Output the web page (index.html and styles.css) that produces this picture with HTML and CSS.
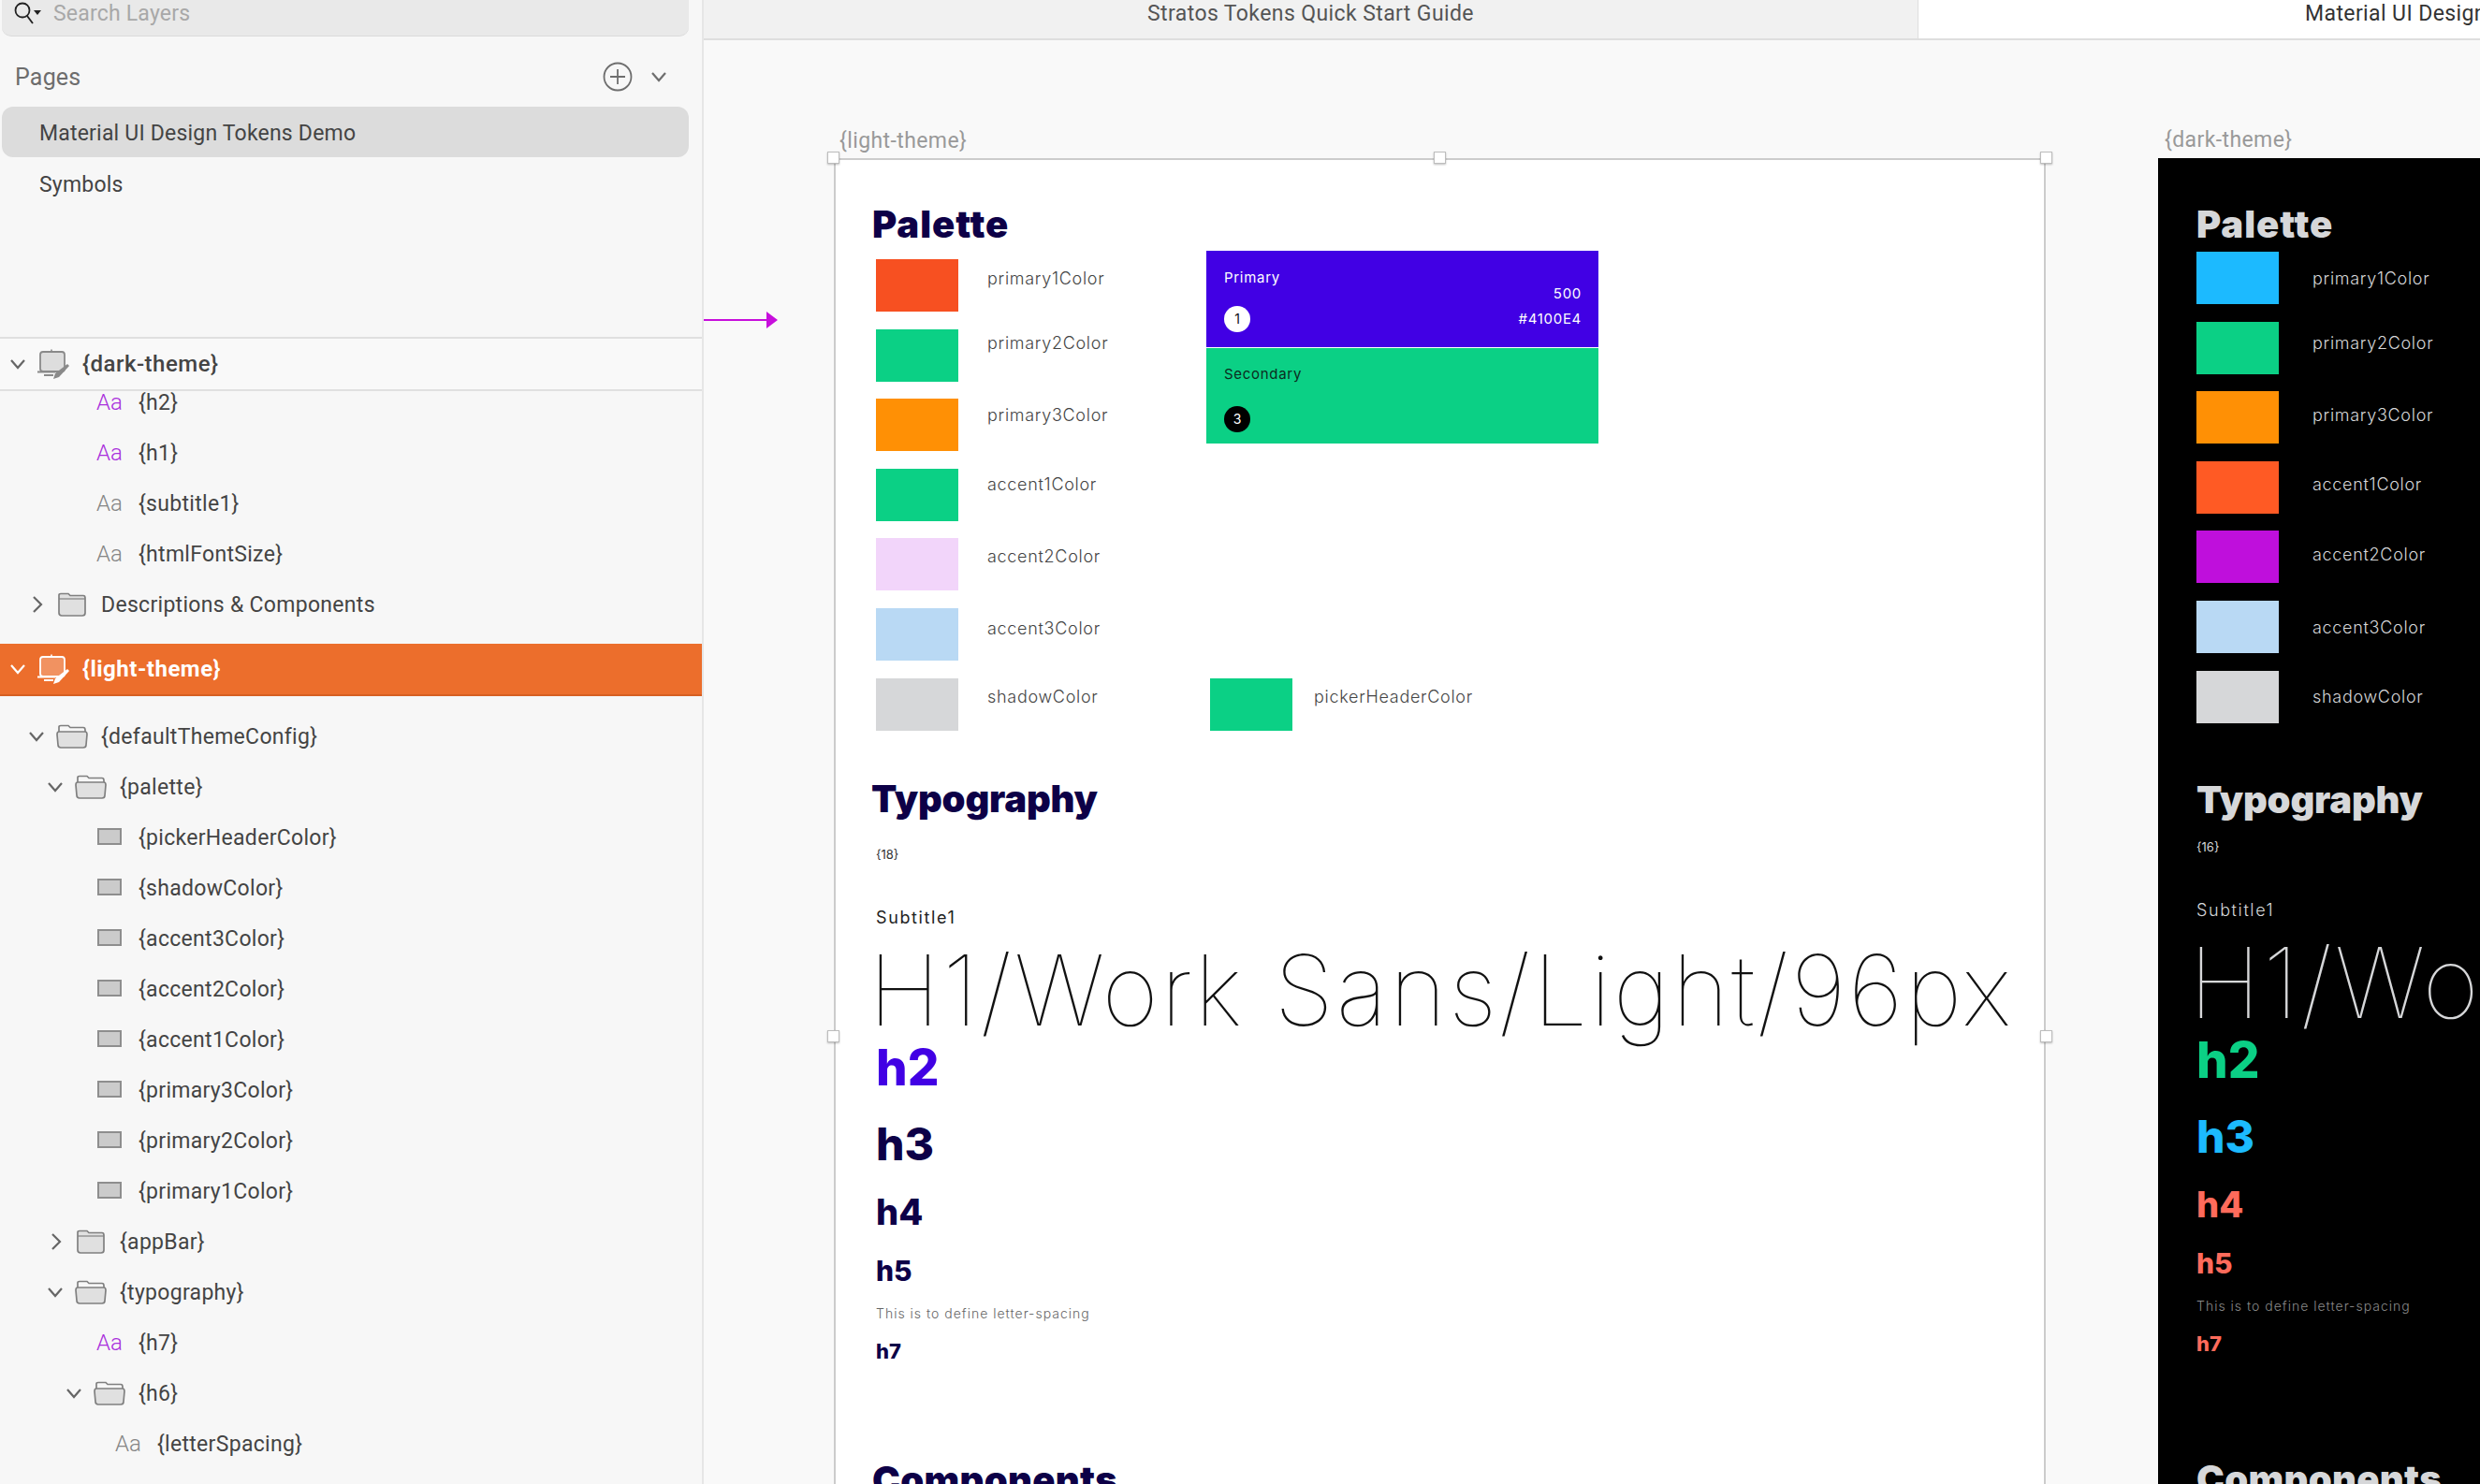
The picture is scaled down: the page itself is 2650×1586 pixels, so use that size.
FILE: index.html
```html
<!DOCTYPE html>
<html>
<head>
	<title>Material UI Design Tokens Demo</title>
	<link rel="stylesheet" href="styles.css">
</head>
<body>

	<svg class="defs" width="0" height="0">
		<symbol id="chev-down" viewBox="0 0 22 22"><path d="M4 7 L11 15 L18 7" fill="none" stroke="currentColor" stroke-width="2.2"/></symbol>
		<symbol id="chev-right" viewBox="0 0 22 22"><path d="M8 3 L16 11 L8 19" fill="none" stroke="currentColor" stroke-width="2.2"/></symbol>
		<symbol id="artboard" viewBox="0 0 34 32">
			<path d="M15 3 V0.5" stroke="currentColor" stroke-width="1.6"/>
			<rect x="3" y="3" width="26" height="21" rx="3" fill="currentColor" fill-opacity=".25" stroke="currentColor" stroke-width="1.8"/>
			<path d="M0 24.5 H19 M7 28 H17" stroke="currentColor" stroke-width="1.8"/>
			<path d="M32 16 L34 18 L23 30 L17 32 L19 26 Z" fill="currentColor"/>
		</symbol>
		<symbol id="folder" viewBox="0 0 34 26">
			<path d="M3 7 V3 Q3 1.5 5 1.5 H13 L15 3.5 H29 Q31 3.5 31 6 V22 Q31 25 28 25 H6 Q3 25 3 22 Z" fill="#e0e0e0" stroke="#808080" stroke-width="1.7"/>
			<path d="M3 7 H31" stroke="#808080" stroke-width="1.2"/>
		</symbol>
		<symbol id="folder-open" viewBox="0 0 34 26">
			<path d="M3 8 V3 Q3 1.5 5 1.5 H13 L15 3.5 H29 Q31 3.5 31 6 V8" fill="none" stroke="#808080" stroke-width="1.7"/>
			<path d="M3 8 H31 Q33 8 33 11 L32 22 Q32 25 29 25 H5 Q2 25 2 22 L1 11 Q1 8 3 8 Z" fill="#e0e0e0" stroke="#808080" stroke-width="1.7"/>
		</symbol>
		<symbol id="swatch" viewBox="0 0 34 26"><rect x="5" y="4" width="24" height="16" fill="#cbcbcb" stroke="#8e8e8e" stroke-width="2"/></symbol>
	</svg>

	<div class="app">

		<aside class="sidebar">

			<section class="pages">
				<div class="search">
					<svg class="search-icon" width="32" height="26" viewBox="0 0 32 26">
						<circle cx="10" cy="9" r="7.5" fill="none" stroke="#222" stroke-width="1.8"/>
						<path d="M15 15 L21 23" stroke="#222" stroke-width="1.8"/>
						<path d="M22 9 H30 L26 14 Z" fill="#222"/>
					</svg>
					<span>Search Layers</span>
				</div>
				<div class="pages-head">
					<span>Pages</span>
					<svg class="add-icon" width="32" height="32" viewBox="0 0 32 32">
						<circle cx="16" cy="16" r="14.5" fill="none" stroke="#6e6e6e" stroke-width="1.8"/>
						<path d="M16 8 V24 M8 16 H24" stroke="#6e6e6e" stroke-width="1.8"/>
					</svg>
					<svg class="icon-chev" width="22" height="22"><use href="#chev-down"/></svg>
				</div>
				<div class="page-item selected">Material UI Design Tokens Demo</div>
				<div class="page-item">Symbols</div>
			</section>

			<div class="row board-row">
				<svg class="toggle" width="22" height="22"><use href="#chev-down"/></svg>
				<svg class="kind kind-board" width="34" height="32"><use href="#artboard"/></svg>
				<span>{dark-theme}</span>
			</div>

			<div class="tree">
				<div class="row lvl3 first"><i class="toggle"></i><b class="aa purple">Aa</b><span>{h2}</span></div>
				<div class="row lvl3"><i class="toggle"></i><b class="aa purple">Aa</b><span>{h1}</span></div>
				<div class="row lvl3"><i class="toggle"></i><b class="aa">Aa</b><span>{subtitle1}</span></div>
				<div class="row lvl3"><i class="toggle"></i><b class="aa">Aa</b><span>{htmlFontSize}</span></div>
				<div class="row lvl1"><svg class="toggle" width="22" height="22"><use href="#chev-right"/></svg><svg class="kind" width="34" height="26"><use href="#folder"/></svg><span>Descriptions &amp; Components</span></div>

				<div class="row board-row active">
					<svg class="toggle" width="22" height="22"><use href="#chev-down"/></svg>
					<svg class="kind kind-board" width="34" height="32"><use href="#artboard"/></svg>
					<span>{light-theme}</span>
				</div>

				<div class="row lvl1 after-active"><svg class="toggle" width="22" height="22"><use href="#chev-down"/></svg><svg class="kind" width="34" height="26"><use href="#folder-open"/></svg><span>{defaultThemeConfig}</span></div>
				<div class="row lvl2"><svg class="toggle" width="22" height="22"><use href="#chev-down"/></svg><svg class="kind" width="34" height="26"><use href="#folder-open"/></svg><span>{palette}</span></div>
				<div class="row lvl3"><i class="toggle"></i><svg class="kind" width="34" height="26"><use href="#swatch"/></svg><span>{pickerHeaderColor}</span></div>
				<div class="row lvl3"><i class="toggle"></i><svg class="kind" width="34" height="26"><use href="#swatch"/></svg><span>{shadowColor}</span></div>
				<div class="row lvl3"><i class="toggle"></i><svg class="kind" width="34" height="26"><use href="#swatch"/></svg><span>{accent3Color}</span></div>
				<div class="row lvl3"><i class="toggle"></i><svg class="kind" width="34" height="26"><use href="#swatch"/></svg><span>{accent2Color}</span></div>
				<div class="row lvl3"><i class="toggle"></i><svg class="kind" width="34" height="26"><use href="#swatch"/></svg><span>{accent1Color}</span></div>
				<div class="row lvl3"><i class="toggle"></i><svg class="kind" width="34" height="26"><use href="#swatch"/></svg><span>{primary3Color}</span></div>
				<div class="row lvl3"><i class="toggle"></i><svg class="kind" width="34" height="26"><use href="#swatch"/></svg><span>{primary2Color}</span></div>
				<div class="row lvl3"><i class="toggle"></i><svg class="kind" width="34" height="26"><use href="#swatch"/></svg><span>{primary1Color}</span></div>
				<div class="row lvl2"><svg class="toggle" width="22" height="22"><use href="#chev-right"/></svg><svg class="kind" width="34" height="26"><use href="#folder"/></svg><span>{appBar}</span></div>
				<div class="row lvl2"><svg class="toggle" width="22" height="22"><use href="#chev-down"/></svg><svg class="kind" width="34" height="26"><use href="#folder-open"/></svg><span>{typography}</span></div>
				<div class="row lvl3"><i class="toggle"></i><b class="aa purple">Aa</b><span>{h7}</span></div>
				<div class="row lvl3"><svg class="toggle" width="22" height="22"><use href="#chev-down"/></svg><svg class="kind" width="34" height="26"><use href="#folder-open"/></svg><span>{h6}</span></div>
				<div class="row lvl4"><i class="toggle"></i><b class="aa">Aa</b><span>{letterSpacing}</span></div>
			</div>

		</aside>

		<main class="main">

			<div class="tabs">
				<div class="tab">Stratos Tokens Quick Start Guide</div>
				<div class="tab tab-current">Material UI Design Tokens Demo</div>
			</div>

			<div class="canvas">

				<svg class="flow-arrow" width="80" height="18" viewBox="0 0 80 18">
					<path d="M0 9 H68" stroke="#c70fdc" stroke-width="2"/>
					<path d="M67 0 L79 9 L67 18 Z" fill="#c70fdc"/>
				</svg>

				<article class="board board-light">
					<div class="board-name">{light-theme}</div>
					<i class="handle h-tl"></i><i class="handle h-tm"></i><i class="handle h-tr"></i>
					<i class="handle h-ml"></i><i class="handle h-mr"></i>

					<h2 class="heading heading-palette">Palette</h2>
					<div class="palette">
						<div class="swatches">
							<div class="swatch-row"><div class="swatch c-orange"></div><div class="swatch-name">primary1Color</div></div>
							<div class="swatch-row"><div class="swatch c-green"></div><div class="swatch-name">primary2Color</div></div>
							<div class="swatch-row"><div class="swatch c-amber"></div><div class="swatch-name">primary3Color</div></div>
							<div class="swatch-row"><div class="swatch c-green"></div><div class="swatch-name">accent1Color</div></div>
							<div class="swatch-row"><div class="swatch c-pink"></div><div class="swatch-name">accent2Color</div></div>
							<div class="swatch-row"><div class="swatch c-sky"></div><div class="swatch-name">accent3Color</div></div>
							<div class="swatch-row">
								<div class="swatch c-grey"></div><div class="swatch-name">shadowColor</div>
								<div class="swatch c-green"></div><div class="swatch-name picker-name">pickerHeaderColor</div>
							</div>
						</div>
						<div class="color-cards">
							<div class="color-card card-primary">
								<div class="card-title">Primary</div>
								<div class="card-shade">500</div>
								<div class="card-foot"><span class="dot dot-white">1</span><span>#4100E4</span></div>
							</div>
							<div class="color-card card-secondary">
								<div class="card-title">Secondary</div>
								<div class="card-foot"><span class="dot dot-black">3</span></div>
							</div>
						</div>
					</div>

					<h2 class="heading heading-type">Typography</h2>
					<div class="font-size">{18}</div>
					<div class="subtitle">Subtitle1</div>
					<div class="t-h1">H1/Work Sans/Light/96px</div>
					<div class="t-h2">h2</div>
					<div class="t-h3">h3</div>
					<div class="t-h4">h4</div>
					<div class="t-h5">h5</div>
					<div class="t-h6">This is to define letter-spacing</div>
					<div class="t-h7">h7</div>
					<h2 class="heading heading-comp">Components</h2>
				</article>

				<article class="board board-dark">
					<div class="board-name">{dark-theme}</div>

					<h2 class="heading heading-palette">Palette</h2>
					<div class="palette">
						<div class="swatches">
							<div class="swatch-row"><div class="swatch c-blue"></div><div class="swatch-name">primary1Color</div></div>
							<div class="swatch-row"><div class="swatch c-green"></div><div class="swatch-name">primary2Color</div></div>
							<div class="swatch-row"><div class="swatch c-amber"></div><div class="swatch-name">primary3Color</div></div>
							<div class="swatch-row"><div class="swatch c-orange2"></div><div class="swatch-name">accent1Color</div></div>
							<div class="swatch-row"><div class="swatch c-purple"></div><div class="swatch-name">accent2Color</div></div>
							<div class="swatch-row"><div class="swatch c-sky"></div><div class="swatch-name">accent3Color</div></div>
							<div class="swatch-row"><div class="swatch c-grey"></div><div class="swatch-name">shadowColor</div></div>
						</div>
					</div>

					<h2 class="heading heading-type">Typography</h2>
					<div class="font-size">{16}</div>
					<div class="subtitle">Subtitle1</div>
					<div class="t-h1">H1/Work Sans/Light/96px</div>
					<div class="t-h2">h2</div>
					<div class="t-h3">h3</div>
					<div class="t-h4">h4</div>
					<div class="t-h5">h5</div>
					<div class="t-h6">This is to define letter-spacing</div>
					<div class="t-h7">h7</div>
					<h2 class="heading heading-comp">Components</h2>
				</article>

			</div>
		</main>

	</div>

</body>
</html>
```

FILE: styles.css
```css
html, body {
	margin: 0;
	height: 100%;
	overflow: hidden;
}
body {
	font-family: Roboto, "Liberation Sans", sans-serif;
	font-size: 23px;
	letter-spacing: .2px;
	color: #444;
	background: #f9f9f9;
}
.defs { position: absolute; }
.app {
	display: flex;
	width: 2650px;
	height: 1586px;
	overflow: hidden;
}

/* sidebar */
.sidebar {
	width: 750px;
	flex: none;
	display: flex;
	flex-direction: column;
	background: #f7f7f7;
	border-right: 2px solid #e6e6e6;
}
.pages {
	height: 360px;
	flex: none;
	border-bottom: 2px solid #e0e0e0;
}
.search {
	display: flex;
	align-items: center;
	gap: 11px;
	box-sizing: border-box;
	height: 39px;
	margin: 0 14px 0 2px;
	padding: 0 0 10px 12px;
	background: #e9e9e9;
	border-bottom: 1px solid #dadada;
	border-radius: 0 0 10px 10px;
	color: #a8a8a8;
}
.search-icon { margin-top: 2px; }
.pages-head {
	display: flex;
	align-items: center;
	height: 75px;
	padding: 10px 35px 0 16px;
	box-sizing: border-box;
	font-size: 25px;
	color: #6d6d6d;
}
.pages-head span { flex: 1; padding-top: 2px; }
.icon-chev { margin-left: 17px; color: #6e6e6e; }
.page-item {
	display: flex;
	align-items: center;
	height: 54px;
	margin: 0 14px 2px 2px;
	padding-left: 40px;
	border-radius: 12px;
}
.page-item.selected { background: #dcdcdc; padding-top: 2px; box-sizing: border-box; }

.row {
	display: flex;
	align-items: center;
	height: 54px;
	flex: none;
	box-sizing: border-box;
	letter-spacing: .3px;
}
.row > .toggle { width: 22px; height: 22px; flex: none; margin-right: 10px; color: #666; display: block; }
.row > .kind { flex: none; margin-right: 14px; color: #8a8a8a; }
.aa {
	width: 34px;
	flex: none;
	margin-right: 14px;
	font-weight: 300;
	font-size: 24px;
	letter-spacing: 0;
	text-align: center;
	color: #858585;
}
.aa.purple { color: #a92fdc; }
.lvl1 { padding-left: 28px; }
.lvl2 { padding-left: 48px; }
.lvl3 { padding-left: 68px; }
.lvl4 { padding-left: 88px; }

.board-row {
	padding-left: 8px;
	font-size: 24px;
	font-weight: 500;
	letter-spacing: .5px;
	background: #f9f9f9;
	border-bottom: 2px solid #e0e0e0;
	height: 56px;
}
.tree {
	flex: 1;
	overflow: hidden;
}
.row.first { margin-top: -15px; }
.board-row.active {
	margin-top: 15px;
	background: #ec6e2c;
	border-bottom-color: #d65f22;
	color: #fff;
	font-weight: 700;
}
.board-row.active > .toggle, .board-row.active > .kind { color: #fff; }
.after-active { margin-top: 16px; }

/* top tabs and canvas */
.main {
	flex: 1;
	min-width: 0;
	display: flex;
	flex-direction: column;
}
.tabs {
	display: flex;
	height: 43px;
	flex: none;
	background: #fff;
	border-bottom: 2px solid #dedede;
	box-sizing: border-box;
}
.tab {
	width: 1297px;
	flex: none;
	text-align: center;
	line-height: 30px;
	letter-spacing: .4px;
	background: #f1f1f1;
	border-right: 1px solid #dedede;
	color: #555;
}
.tab-current {
	width: auto;
	text-align: left;
	padding-left: 413px;
	background: #fff;
	border-right: 0;
	white-space: nowrap;
	color: #333;
}
.canvas {
	position: relative;
	flex: 1;
	background: #f9f9f9;
}
.flow-arrow {
	position: absolute;
	left: 0;
	top: 290px;
}

/* artboards sit on a free canvas */
.board {
	position: absolute;
	box-sizing: border-box;
	width: 1295px;
	height: 1877px;
	font-family: Inter, "Liberation Sans", sans-serif;
	letter-spacing: 0;
}
.board-name {
	position: absolute;
	bottom: 100%;
	left: 7px;
	margin-bottom: 6px;
	font-family: Roboto, "Liberation Sans", sans-serif;
	letter-spacing: .4px;
	color: #999;
	white-space: nowrap;
}
.board-light .board-name { left: 4px; margin-bottom: 7px; }
.board-light {
	left: 139px;
	top: 126px;
	padding: 45px 0 0 43px;
	background: #fff;
	border: 2px solid #cccccc;
}
.board-dark {
	left: 1554px;
	top: 126px;
	padding: 47px 0 0 41px;
	background: #000;
	color: #d6d7d9;
}
.handle {
	position: absolute;
	z-index: 2;
	box-sizing: border-box;
	width: 13px;
	height: 13px;
	background: #fff;
	border: 1px solid #bdbdbd;
	box-shadow: 0 1px 2px rgba(0,0,0,.25);
}
.h-tl { left: -9px; top: -9px; }
.h-tm { left: 639px; top: -9px; }
.h-tr { right: -9px; top: -9px; }
.h-ml { left: -9px; top: 930px; }
.h-mr { right: -9px; top: 930px; }

.heading {
	margin: 0;
	font-size: 40px;
	line-height: 48px;
	font-weight: 900;
	color: #0d0047;
	white-space: nowrap;
}
.board-dark .heading { color: #d6d7d9; }
.heading-palette { margin-left: -4px; letter-spacing: 1px; }
.board-dark .heading-palette { margin-left: 0; }

.palette {
	display: flex;
	align-items: flex-start;
	margin-top: 4px;
}
.board-dark .palette { margin-top: 5px; }
.swatches {
	width: 353px;
	flex: none;
	padding-top: 9px;
	display: flex;
	flex-direction: column;
	gap: 18.6px;
}
.board-dark .swatches { padding-top: 0; }
.swatch-row { display: flex; align-items: flex-start; white-space: nowrap; }
.swatch { width: 88px; height: 56px; flex: none; }
.swatch-name {
	width: 238px;
	flex: none;
	margin-left: 31px;
	font-weight: 300;
	font-size: 18px;
	letter-spacing: .7px;
	line-height: 24px;
	color: #444;
}
.board-dark .swatch-name { margin-left: 36px; color: #d6d7d9; }
.picker-name { margin-left: 23px; }
.swatch-row:nth-child(1) .swatch-name { margin-top: 9px; }
.swatch-row:nth-child(2) .swatch-name { margin-top: 3px; }
.swatch-row:nth-child(3) .swatch-name { margin-top: 6px; }
.swatch-row:nth-child(4) .swatch-name { margin-top: 5px; }
.swatch-row:nth-child(5) .swatch-name { margin-top: 8px; }
.swatch-row:nth-child(6) .swatch-name { margin-top: 10px; }
.swatch-row:nth-child(7) .swatch-name { margin-top: 8px; }
.board-dark .swatch-row:nth-child(1) .swatch-name { margin-top: 17px; }
.board-dark .swatch-row:nth-child(2) .swatch-name { margin-top: 11px; }
.board-dark .swatch-row:nth-child(3) .swatch-name { margin-top: 14px; }
.board-dark .swatch-row:nth-child(4) .swatch-name { margin-top: 13px; }
.board-dark .swatch-row:nth-child(5) .swatch-name { margin-top: 14px; }
.board-dark .swatch-row:nth-child(6) .swatch-name { margin-top: 17px; }
.board-dark .swatch-row:nth-child(7) .swatch-name { margin-top: 16px; }

.c-orange { background: #f75021; }
.c-orange2 { background: #ff5a24; }
.c-green { background: #0bd085; }
.c-amber { background: #ff9005; }
.c-pink { background: #f2d5fa; }
.c-sky { background: #b9d9f4; }
.c-grey { background: #d6d7d9; }
.c-blue { background: #1cbaff; }
.c-purple { background: #bf0fdc; }

.color-cards {
	width: 419px;
	flex: none;
	display: flex;
	flex-direction: column;
	gap: 1px;
	font-size: 15px;
	letter-spacing: .7px;
}
.color-card {
	position: relative;
	box-sizing: border-box;
	height: 102px;
	padding: 19px 18px 0 19px;
	line-height: 20px;
}
.card-primary { height: 103px; background: #4100e4; color: #fff; }
.card-secondary { background: #0bd085; color: #0c2b20; padding-top: 18px; }
.card-shade { text-align: right; margin-top: -3px; }
.card-foot {
	display: flex;
	align-items: center;
	justify-content: space-between;
	margin-top: 3px;
}
.card-secondary .card-foot { margin-top: 24px; }
.dot {
	display: block;
	width: 28px;
	height: 28px;
	border-radius: 50%;
	text-align: center;
	line-height: 28px;
	font-size: 14px;
	letter-spacing: 0;
}
.dot-white { background: #fff; color: #111; }
.dot-black { background: #000; color: #fff; }

.heading-type { margin: 49px 0 0 -5px; letter-spacing: -.2px; }
.board-dark .heading-type { margin: 58px 0 0 0; }
.font-size {
	margin-top: 27.5px;
	font-size: 13px;
	line-height: 16px;
	color: #333;
}
.board-dark .font-size { margin-top: 18.5px; color: #d6d7d9; }
.subtitle {
	margin-top: 48px;
	font-size: 18px;
	line-height: 24px;
	letter-spacing: 1.6px;
	font-weight: 400;
	color: #222;
}
.board-dark .subtitle { color: #d6d7d9; font-weight: 300; }
.t-h1 {
	margin: 4.5px 0 0 -8px;
	font-size: 104px;
	line-height: 120px;
	font-weight: 100;
	letter-spacing: 2.5px;
	white-space: nowrap;
	color: #111;
}
.board-dark .t-h1 { color: #d6d7d9; }
.t-h2, .t-h3, .t-h4, .t-h5, .t-h7 { font-weight: 800; color: #0d0047; }
.t-h2 { margin-top: -7px; font-size: 53px; line-height: 60px; color: #4100e4; }
.t-h3 { margin-top: 24px; font-size: 48px; line-height: 56px; }
.t-h4 { margin-top: 22.5px; font-size: 38px; line-height: 44px; }
.t-h5 { margin-top: 23px; font-size: 30px; line-height: 36px; }
.t-h6 { margin-top: 18px; font-size: 14px; line-height: 20px; letter-spacing: 1px; color: #666; white-space: nowrap; font-weight: 300; }
.t-h7 { margin-top: 17px; font-size: 22px; line-height: 26px; }
.board-dark .t-h2 { color: #0bd085; }
.board-dark .t-h3 { color: #1cbaff; }
.board-dark .t-h4, .board-dark .t-h5, .board-dark .t-h7 { color: #ff6b5b; }
.board-dark .t-h6 { color: #8a8a8a; }
.heading-comp { margin: 100.5px 0 0 -4px; letter-spacing: .3px; }
.board-dark .heading-comp { margin: 108px 0 0 0; }
```
